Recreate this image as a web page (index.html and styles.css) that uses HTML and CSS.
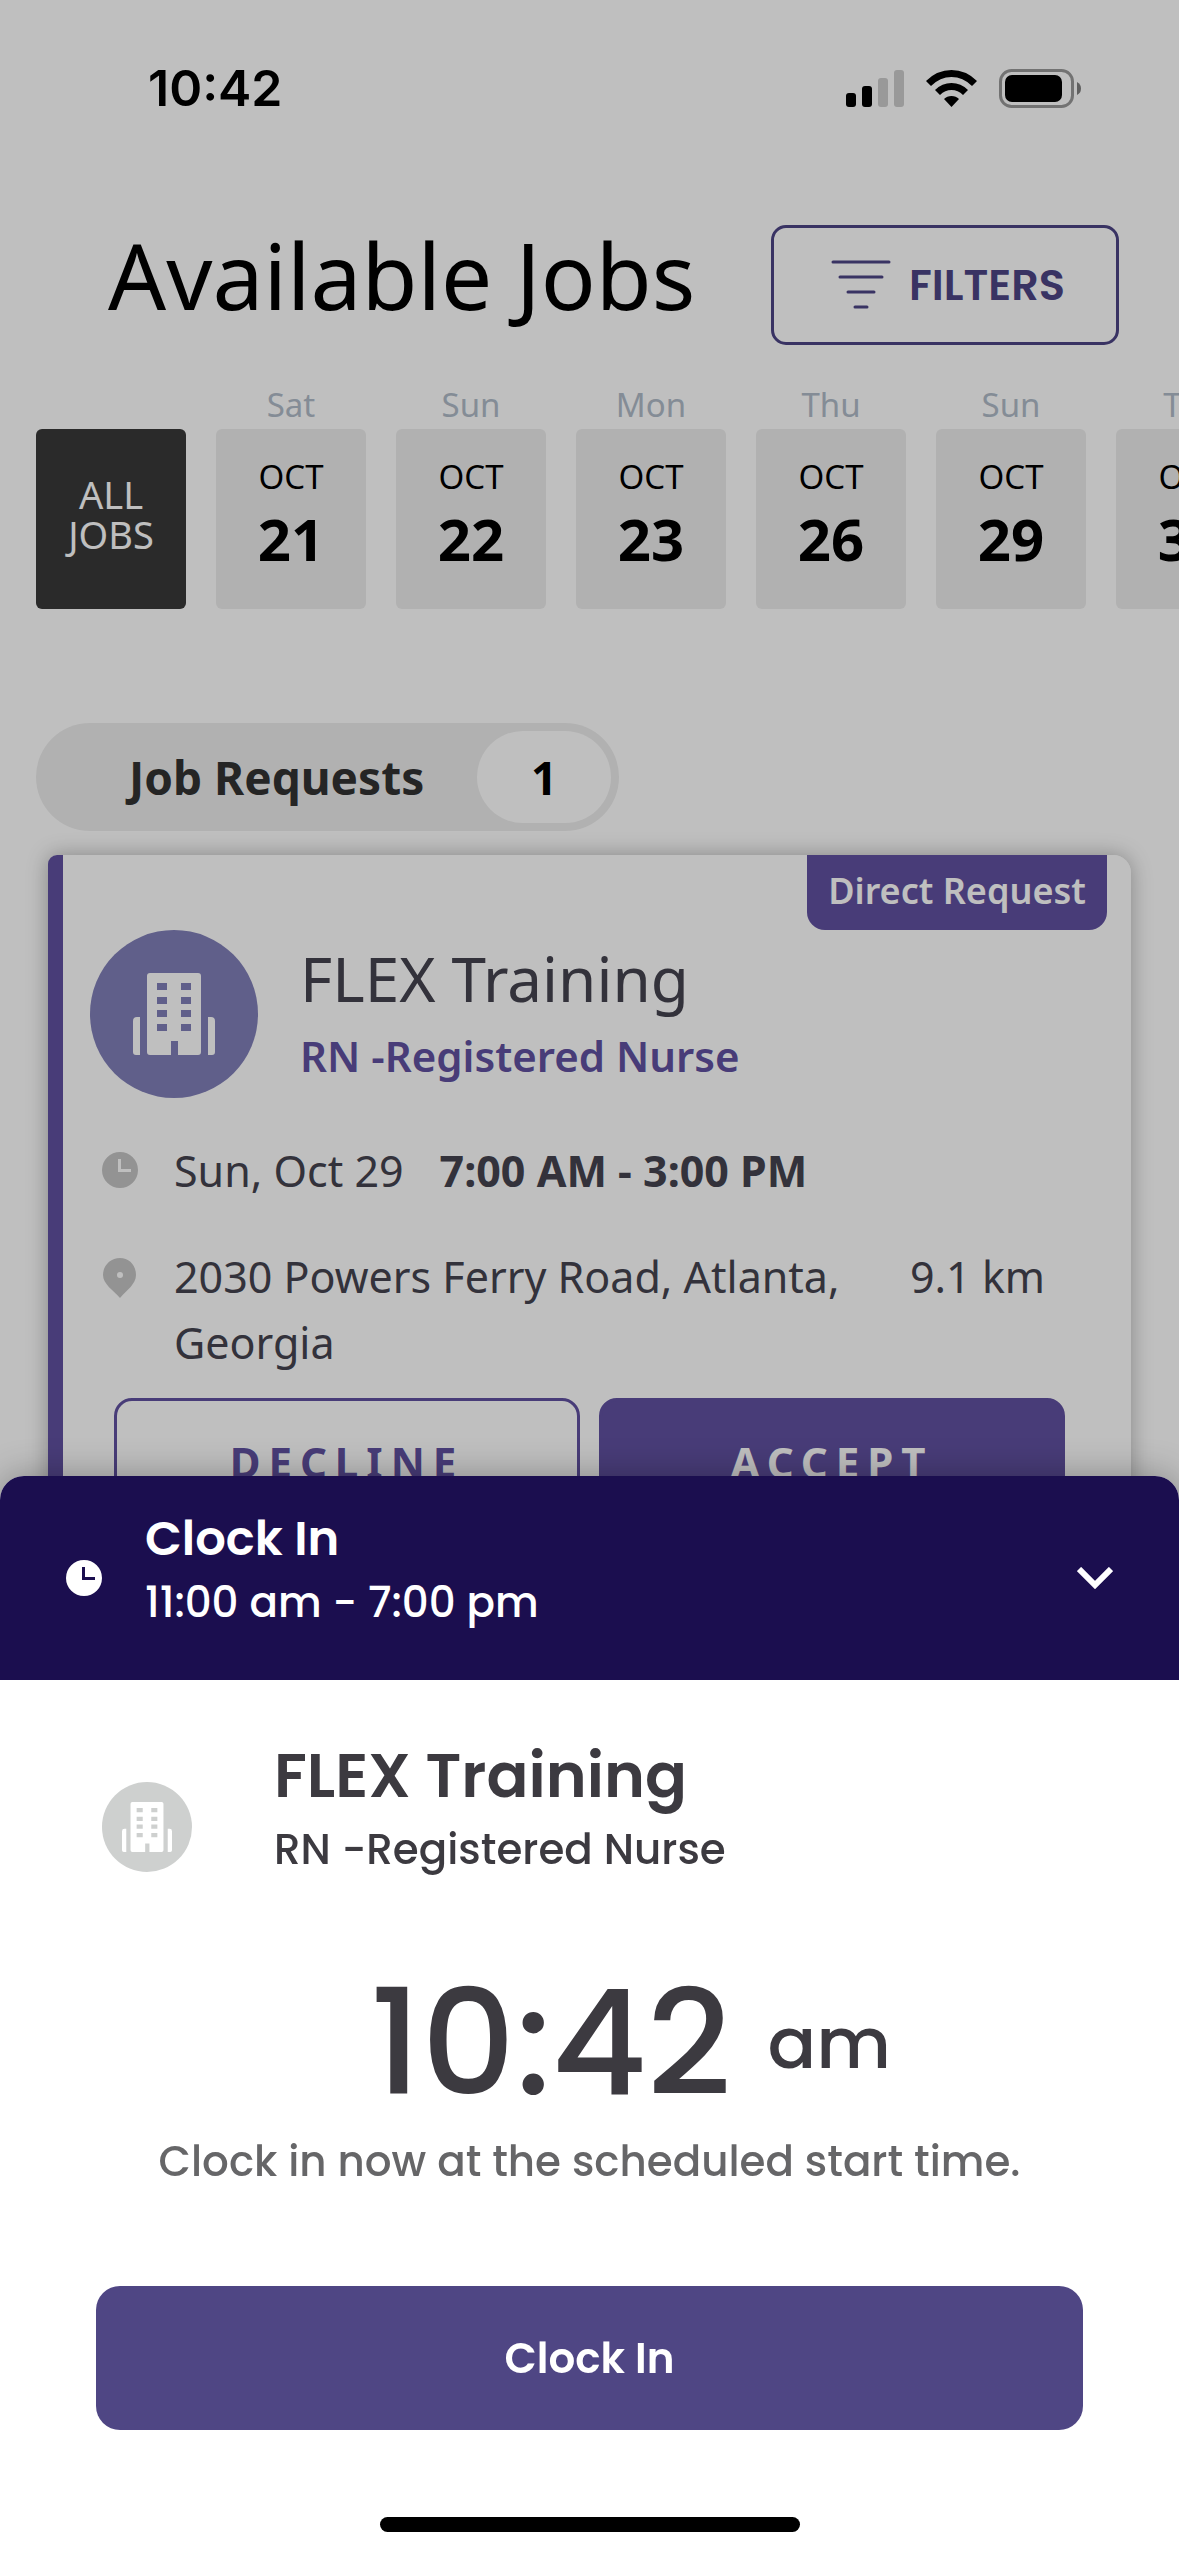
FILE: index.html
```html
<!DOCTYPE html>
<html lang="en">
<head>
  <meta charset="UTF-8">
  <meta name="viewport" content="width=device-width, initial-scale=1">
  <title>Available Jobs</title>
  <link rel="stylesheet" href="styles.css">
</head>
<body>
  <svg class="defs" aria-hidden="true">
    <symbol id="building" viewBox="0 0 82 82">
      <path fill-rule="evenodd" d="M17 0H65Q68 0 68 3V79Q68 82 65 82H45V68H38V82H17Q14 82 14 79V3Q14 0 17 0ZM24 10V17H34V10ZM48 10V17H58V10ZM24 24V31H34V24ZM48 24V31H58V24ZM24 37V44H34V37ZM48 37V44H58V37ZM24 51V58H34V51ZM48 51V58H58V51Z"/>
      <path d="M7 44V82H3Q0 82 0 79V48Q0 44 4 44ZM75 44V82H79Q82 82 82 79V48Q82 44 78 44Z"/>
    </symbol>
    <symbol id="clock" viewBox="0 0 36 36">
      <path fill-rule="evenodd" d="M18 0A18 18 0 1 1 18 36A18 18 0 1 1 18 0ZM16 7V20H29V17H19V7Z"/>
    </symbol>
  </svg>

  <div class="page">
    <div class="status">
      <span class="time">10:42</span>
      <div class="status-icons">
        <svg width="58" height="37" viewBox="0 0 58 37">
          <rect x="0" y="23" width="10" height="14" rx="3"/>
          <rect x="16" y="16" width="10" height="21" rx="3"/>
          <rect x="32" y="8" width="10" height="29" rx="3" opacity=".2"/>
          <rect x="48" y="0" width="10" height="37" rx="3" opacity=".2"/>
        </svg>
        <svg width="51" height="37" viewBox="0 0 51 37">
          <path d="M0 11Q11 0 25.500 0Q40 0 51 11L46 16Q37 7 25.500 7Q14 7 5 16Z"/>
          <path d="M9 20Q16 13 25.500 13Q35 13 42 20L37 25Q32 20 25.500 20Q19 20 14 25Z"/>
          <path d="M18 29Q21 26 25.500 26Q30 26 33 29L25.500 37Z"/>
        </svg>
        <svg width="82" height="39" viewBox="0 0 82 39">
          <rect x="1.500" y="1.500" width="72" height="36" rx="11" fill="none" stroke="#000" stroke-width="3" opacity=".4"/>
          <rect x="6" y="6" width="57" height="27" rx="7"/>
          <path d="M78 13Q82 15 82 19.500Q82 24 78 26Z" opacity=".5"/>
        </svg>
      </div>
    </div>

    <header class="header">
      <h1>Available Jobs</h1>
      <button class="filters" type="button">
        <svg width="60" height="50" viewBox="0 0 60 50" fill="none" stroke="currentColor" stroke-width="3" stroke-linecap="round">
          <path d="M2 2H58M9 17H51M17 32H43M24 47H36"/>
        </svg>
        FILTERS
      </button>
    </header>

    <nav class="dates">
      <div class="date"><button class="all" type="button">ALL<br>JOBS</button></div>
      <div class="date"><span>Sat</span><button type="button">OCT<b>21</b></button></div>
      <div class="date"><span>Sun</span><button type="button">OCT<b>22</b></button></div>
      <div class="date"><span>Mon</span><button type="button">OCT<b>23</b></button></div>
      <div class="date"><span>Thu</span><button type="button">OCT<b>26</b></button></div>
      <div class="date"><span>Sun</span><button type="button">OCT<b>29</b></button></div>
      <div class="date"><span>Tue</span><button type="button">OCT<b>31</b></button></div>
    </nav>

    <main class="list">
      <h2 class="pill">Job Requests <span>1</span></h2>
      <article class="card">
        <span class="badge">Direct Request</span>
        <div class="job">
          <span class="avatar"><svg width="82" height="82"><use href="#building"/></svg></span>
          <div>
            <h3>FLEX Training</h3>
            <p class="role">RN -Registered Nurse</p>
          </div>
        </div>
        <div class="row">
          <svg class="icon" width="36" height="36"><use href="#clock"/></svg>
          <span>Sun, Oct 29</span>
          <b>7:00 AM - 3:00 PM</b>
        </div>
        <div class="row">
          <svg class="icon" width="36" height="40" viewBox="0 0 36 40">
            <path fill-rule="evenodd" d="M18 0C27 0 34 7 34 17C34 26 25 32 18 40C11 32 1 26 1 17C1 7 9 0 18 0ZM18 14A3 3 0 1 0 18 20A3 3 0 1 0 18 14Z"/>
          </svg>
          <span class="address">2030 Powers Ferry Road, Atlanta, Georgia</span>
          <span>9.1 km</span>
        </div>
        <div class="actions">
          <button class="decline" type="button">DECLINE</button>
          <button class="accept" type="button">ACCEPT</button>
        </div>
      </article>
    </main>
  </div>

  <div class="backdrop"></div>

  <section class="sheet">
    <header class="sheet-head">
      <svg width="36" height="36" fill="#fff"><use href="#clock"/></svg>
      <div class="sheet-title">
        <h2>Clock In</h2>
        <p>11:00 am - 7:00 pm</p>
      </div>
      <button class="close" type="button" aria-label="Collapse">
        <svg width="36" height="22" viewBox="0 0 36 22" fill="none" stroke="#fff" stroke-width="6"><path d="M2 2L18 18L34 2"/></svg>
      </button>
    </header>
    <div class="shift">
      <span class="avatar small"><svg width="50" height="50"><use href="#building"/></svg></span>
      <div>
        <h3>FLEX Training</h3>
        <p>RN -Registered Nurse</p>
      </div>
    </div>
    <div class="now">10:42 <span>am</span></div>
    <p class="note">Clock in now at the scheduled start time.</p>
    <button class="clock-in" type="button">Clock In</button>
    <div class="home"></div>
  </section>
</body>
</html>
```
FILE: styles.css
```css
* {
  margin: 0;
  padding: 0;
  box-sizing: border-box;
}
body {
  height: 100vh;
  overflow: hidden;
  background: #fff;
  color: #44434f;
  font-family: "Noto Sans", sans-serif;
}
button {
  border: none;
  background: none;
  font: inherit;
  color: inherit;
}
svg {
  display: block;
  flex-shrink: 0;
}
.defs {
  position: absolute;
  width: 0;
  height: 0;
}

/* status bar */
.status {
  display: flex;
  justify-content: space-between;
  align-items: center;
  padding: 56px 98px 0 148px;
}
.time {
  color: #000;
  font: 600 50px/64px Inter, sans-serif;
}
.status-icons {
  display: flex;
  align-items: center;
  gap: 22px;
}

/* title row */
.header {
  display: flex;
  justify-content: space-between;
  align-items: center;
  padding: 95px 60px 0 108px;
}
h1 {
  color: #000;
  font-size: 91px;
  font-weight: 400;
  line-height: 120px;
  padding-bottom: 20px;
  white-space: nowrap;
}
.filters {
  display: flex;
  justify-content: center;
  align-items: center;
  gap: 18px;
  width: 348px;
  height: 120px;
  padding-left: 6px;
  border: 3px solid #4d4485;
  border-radius: 15px;
  color: #4d4485;
  font: 600 43px Poppins, Inter, sans-serif;
}

/* dates */
.dates {
  display: flex;
  align-items: flex-end;
  gap: 30px;
  padding: 26px 0 0 36px;
  overflow: hidden;
}
.date {
  flex: 0 0 150px;
  text-align: center;
}
.date span {
  display: block;
  color: #b0bbc8;
  font-size: 33px;
  line-height: 48px;
}
.date button {
  display: block;
  width: 100%;
  height: 180px;
  border-radius: 6px;
  background: #ededed;
  color: #000;
  font-size: 33px;
  line-height: 40px;
}
.date b {
  display: block;
  font-size: 58px;
  line-height: 84px;
}
.date .all {
  padding-bottom: 10px;
  background: #383838;
  color: #fff;
  font-size: 38px;
}

/* requests */
.list {
  padding: 114px 48px 0 36px;
}
.pill {
  display: inline-flex;
  align-items: center;
  gap: 53px;
  height: 108px;
  padding: 0 8px 0 93px;
  border-radius: 54px;
  background: #ededed;
  color: #323232;
  font-size: 46px;
}
.pill span {
  width: 134px;
  border-radius: 46px;
  background: #fff;
  color: #000;
  line-height: 92px;
  text-align: center;
}
.card {
  position: relative;
  margin: 24px 0 0 12px;
  padding: 75px 52px 60px 42px;
  border-radius: 9px 18px 18px 9px;
  background: linear-gradient(to right, #6050a0 15px, #fff 15px);
  box-shadow: 0 0 21px rgba(0, 0, 0, .3);
}
.badge {
  position: absolute;
  top: 0;
  right: 24px;
  width: 300px;
  border-radius: 0 0 18px 18px;
  background: #6050a0;
  color: #fff;
  font-size: 36px;
  font-weight: 600;
  line-height: 72px;
  padding-bottom: 3px;
  text-align: center;
  white-space: nowrap;
}
.job {
  display: flex;
  gap: 42px;
}
.avatar {
  display: flex;
  flex-shrink: 0;
  justify-content: center;
  align-items: center;
  width: 168px;
  height: 168px;
  border-radius: 50%;
  background: #807fb8;
  fill: #fff;
}
h3 {
  font-size: 62px;
  font-weight: 400;
  line-height: 96px;
}
.role {
  color: #6050a0;
  font-size: 42px;
  font-weight: 600;
  line-height: 60px;
}
.row {
  display: flex;
  gap: 36px;
  margin: 40px 0 0 12px;
  font-size: 43px;
  line-height: 66px;
}
.icon {
  margin-top: 14px;
  fill: #c5c5c5;
}
.address {
  width: 700px;
}
.actions {
  display: flex;
  gap: 19px;
  margin: 22px 14px 0 24px;
}
.actions button {
  flex: 1;
  height: 126px;
  border: 3px solid #6050a0;
  border-radius: 18px;
  color: #6050a0;
  font-size: 42px;
  font-weight: 700;
  letter-spacing: 8px;
}
.actions .accept {
  background: #6050a0;
  color: #fff;
}

.backdrop {
  position: fixed;
  inset: 0;
  background: rgba(0, 0, 0, .25);
}

/* bottom sheet */
.sheet {
  position: fixed;
  left: 0;
  right: 0;
  bottom: 0;
  border-radius: 24px 24px 0 0;
  background: #fff;
  box-shadow: 0 0 36px rgba(0, 0, 0, .3);
  color: #3c3a40;
  font-family: Poppins, Inter, sans-serif;
  font-weight: 500;
}
.sheet-head {
  display: flex;
  align-items: center;
  gap: 43px;
  height: 204px;
  padding: 0 66px;
  border-radius: 24px 24px 0 0;
  background: #1b0e4f;
  color: #fff;
}
.sheet-title {
  flex: 1;
  padding-bottom: 14px;
  font-size: 42px;
  line-height: 64px;
}
.sheet-title h2 {
  font-size: 48px;
  font-weight: 600;
}
.shift {
  display: flex;
  align-items: center;
  gap: 82px;
  padding: 54px 102px 0;
  font-size: 42px;
  line-height: 64px;
}
.small {
  width: 90px;
  height: 90px;
  margin-top: 38px;
  background: #ced0cf;
}
.shift h3 {
  font-weight: 600;
  font-size: 62px;
  line-height: 84px;
}
.now {
  display: flex;
  justify-content: center;
  align-items: center;
  gap: 36px;
  margin: 74px 0 0 82px;
  font-size: 147px;
  line-height: 174px;
}
.now span {
  font-size: 72px;
}
.note {
  color: #666668;
  font-size: 42px;
  line-height: 64px;
  text-align: center;
}
.clock-in {
  display: block;
  width: calc(100% - 192px);
  height: 144px;
  margin: 92px auto 0;
  border-radius: 24px;
  background: #4f4684;
  color: #fff;
  font-size: 42px;
  font-weight: 600;
}
.home {
  width: 420px;
  height: 15px;
  margin: 87px auto 24px;
  border-radius: 8px;
  background: #000;
}
```
